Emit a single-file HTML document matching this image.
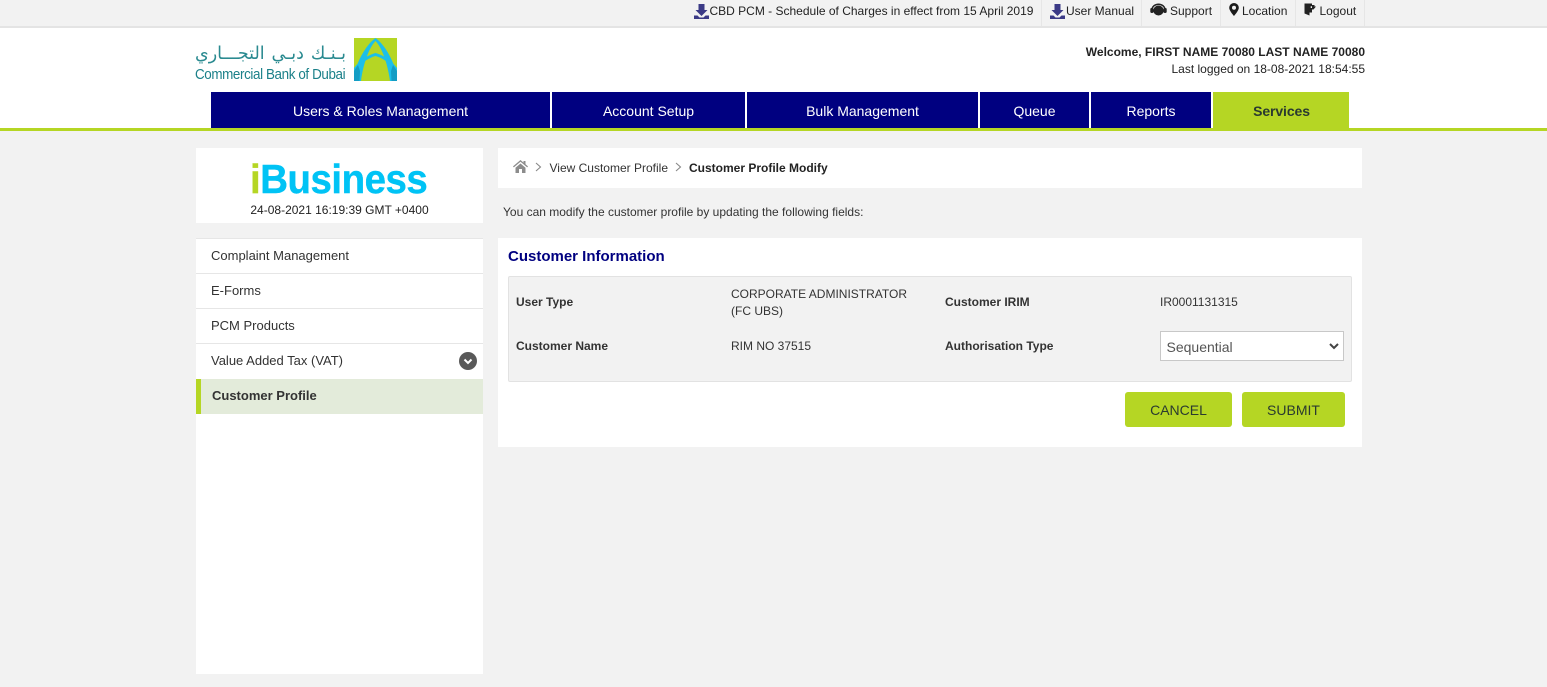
<!DOCTYPE html>
<html lang="en"><head><meta charset="utf-8"><title>Customer Profile Modify</title>
<style>
*{box-sizing:border-box}
html,body{margin:0;padding:0}
body{width:1547px;height:687px;position:relative;overflow:hidden;background:#f2f2f2;font-family:"Liberation Sans",Arial,sans-serif;font-size:12px;color:#222}
.a{position:absolute;white-space:nowrap}
.box{position:absolute;background:#fff}
.nav{position:absolute;top:92px;height:36px;background:#000080;color:#fff;font-size:14px;line-height:38px;text-align:center}
.sep{position:absolute;top:0;width:1px;height:26px;background:#e6e6e6}
.t{position:absolute;white-space:nowrap;line-height:14px;top:4px}
.mi{position:absolute;left:196px;width:287px;height:35px;border-top:1px solid #e6e6e6;padding-left:15px;font-size:13px;line-height:34px;background:#fff;color:#333}
.lab{font-weight:bold;color:#333}
.btn{position:absolute;top:392px;height:35px;background:#b5d624;border-radius:3px;color:#2a3a30;font-size:14px;line-height:36px;text-align:center}
svg{position:absolute;display:block}
</style></head>
<body>
<div class="a" style="left:0;top:0;width:1547px;height:28px;background:#f2f2f2;border-bottom:2px solid #e4e4e4"></div>
<div class="sep" style="left:1041px"></div><div class="sep" style="left:1141px"></div><div class="sep" style="left:1220px"></div><div class="sep" style="left:1295px"></div><div class="sep" style="left:1364px"></div>

<svg style="left:694px;top:4px" width="15" height="15" viewBox="0 0 15 15"><path d="M4.500 0h6v6h3L7.500 12 1.500 6h3z M0 11.500h3.500l2 2h4l2-2H15V15H0z" fill="#3b3a86"/></svg>
<div class="t" style="left:709.500px">CBD PCM - Schedule of Charges in effect from 15 April 2019</div>
<svg style="left:1050px;top:4px" width="15" height="15" viewBox="0 0 15 15"><path d="M4.500 0h6v6h3L7.500 12 1.500 6h3z M0 11.500h3.500l2 2h4l2-2H15V15H0z" fill="#3b3a86"/></svg>
<div class="t" style="left:1066px">User Manual</div>
<svg style="left:1150px;top:3px" width="17" height="14" viewBox="0 0 17 14"><path d="M1.800 7.500C2 3.500 5 1.200 8.500 1.200s6.500 2.300 6.700 6.300" fill="none" stroke="#222" stroke-width="1.500"/><ellipse cx="8.500" cy="7.500" rx="5.200" ry="5" fill="#222"/><rect x="0.300" y="5" width="3.200" height="5" rx="1.200" fill="#222"/><rect x="13.500" y="5" width="3.200" height="5" rx="1.200" fill="#222"/></svg>
<div class="t" style="left:1170px">Support</div>
<svg style="left:1229px;top:3px" width="10" height="13" viewBox="0 0 10 13"><path fill-rule="evenodd" d="M5 0a4.800 4.800 0 0 1 4.800 4.800C9.800 7.800 5 13 5 13S.2 7.800.2 4.800A4.800 4.800 0 0 1 5 0zM5 2.800a2 2 0 1 0 0 4 2 2 0 0 0 0-4z" fill="#1c1c1c"/></svg>
<div class="t" style="left:1242px">Location</div>
<svg style="left:1304px;top:3px" width="13" height="13" viewBox="0 0 13 13"><path d="M.5.500H8v2.800H6.700V5H8V9.500H5.500V12.500L.5 10.500z" fill="#222"/><path d="M8 2h2.500v1.500H12L9.500 6.500H8z" fill="#222"/></svg>
<div class="t" style="left:1319.500px">Logout</div>

<div class="box" style="left:0;top:28px;width:1547px;height:103px;border-bottom:3px solid #b5d624"></div>

<div class="a" dir="rtl" style="left:195px;top:41px;width:151px;height:26px;font-family:'DejaVu Sans',sans-serif;font-size:17.500px;line-height:26px;color:#2a8a90;text-align:justify;text-align-last:justify;white-space:normal">بـنـك دبـي التجـــاري</div>
<div class="a" style="left:195px;top:67px;font-size:14.500px;line-height:16px;color:#1b8089;letter-spacing:-.42px;transform:scaleX(.925);transform-origin:left">Commercial Bank of Dubai</div>
<svg style="left:354px;top:38px" width="43" height="43" viewBox="0 0 43 43"><rect width="43" height="43" fill="#b5d624"/><path d="M21.500 0C13 6 5 20 1 33L0 43H7C9 28 14 11 21.500 3 29 11 34 28 36 43H43L42 33C38 20 30 6 21.500 0Z" fill="#1cbfe9"/><path d="M0 30C6 22 14 17 21.500 15 29 17 37 22 43 30V33C37 26 29 20 21.500 18 14 20 6 26 0 33Z" fill="#1cbfe9"/><path d="M0 33 4 27 6 33 5.500 43H0ZM43 33 39 27 37 33 37.500 43H43Z" fill="#149dc4"/></svg>

<div class="a" style="right:182px;top:45px;line-height:14px;font-weight:bold;color:#222">Welcome, FIRST NAME 70080 LAST NAME 70080</div>
<div class="a" style="right:182px;top:62px;line-height:14px;color:#222">Last logged on 18-08-2021 18:54:55</div>

<div class="nav" style="left:211px;width:339px">Users &amp; Roles Management</div>
<div class="nav" style="left:552px;width:193px">Account Setup</div>
<div class="nav" style="left:747px;width:231px">Bulk Management</div>
<div class="nav" style="left:980px;width:109px">Queue</div>
<div class="nav" style="left:1091px;width:120px">Reports</div>
<div class="nav" style="left:1213px;width:136px;background:#b5d624;color:#2a3a30;font-weight:bold;letter-spacing:-.1px;padding-left:1px">Services</div>

<div class="box" style="left:196px;top:148px;width:287px;height:75px"></div>
<div class="a" style="left:250px;top:154px;font-size:41px;line-height:50px;font-weight:bold;letter-spacing:-.5px;color:#00c3f5;-webkit-text-stroke:.4px #00c3f5;transform:scaleX(.937);transform-origin:left"><span style="color:#b5d624;-webkit-text-stroke:.4px #b5d624">i</span>Business</div>
<div class="a" style="left:196px;width:287px;top:203px;line-height:14px;text-align:center;color:#222">24-08-2021 16:19:39 GMT +0400</div>

<div class="box" style="left:196px;top:238px;width:287px;height:436px"></div>
<div class="mi" style="top:238px">Complaint Management</div>
<div class="mi" style="top:273px">E-Forms</div>
<div class="mi" style="top:308px">PCM Products</div>
<div class="mi" style="top:343px">Value Added Tax (VAT)</div>
<svg style="left:459px;top:352px" width="18" height="18" viewBox="0 0 18 18"><circle cx="9" cy="9" r="9" fill="#595959"/><path d="M5.500 7.500 9 11l3.500-3.500" fill="none" stroke="#fff" stroke-width="2"/></svg>
<div class="a" style="left:196px;top:379px;width:287px;height:35px;background:#e3ebda;border-left:5px solid #b5d624;padding-left:11px;font-size:13px;line-height:33px;font-weight:bold;color:#333">Customer Profile</div>

<div class="box" style="left:498px;top:148px;width:864px;height:40px"></div>
<svg style="left:513px;top:160px" width="15" height="13" viewBox="0 0 15 13"><path d="M7.500 0 0 6.400l.8 1L7.500 1.800l6.700 5.600.8-1L12.500 4.300V1h-2v1.600zM2.500 7.800V13h3.500V9h3v4h3.500V7.800L7.500 3.500z" fill="#8c8c8c"/></svg>
<svg style="left:535px;top:162px" width="7" height="10" viewBox="0 0 7 10"><path d="M1 1l4.500 4L1 9" fill="none" stroke="#888" stroke-width="1.100"/></svg>
<div class="a" style="left:549.500px;top:161px;line-height:14px;color:#333">View Customer Profile</div>
<svg style="left:675px;top:162px" width="7" height="10" viewBox="0 0 7 10"><path d="M1 1l4.500 4L1 9" fill="none" stroke="#888" stroke-width="1.100"/></svg>
<div class="a" style="left:689px;top:161px;line-height:14px;font-weight:bold;color:#222">Customer Profile Modify</div>

<div class="a" style="left:503px;top:205px;line-height:14px;color:#333">You can modify the customer profile by updating the following fields:</div>

<div class="box" style="left:498px;top:238px;width:864px;height:209px"></div>
<div class="a" style="left:508px;top:248px;font-size:15px;line-height:18px;font-weight:bold;color:#000080">Customer Information</div>
<div class="a" style="left:508px;top:276px;width:844px;height:106px;background:#f2f2f2;border:1px solid #e2e2e2;border-radius:2px"></div>

<div class="a lab" style="left:516px;top:295px;line-height:14px">User Type</div>
<div class="a" style="left:731px;top:286px;line-height:17px;color:#333">CORPORATE ADMINISTRATOR<br>(FC UBS)</div>
<div class="a lab" style="left:945px;top:295px;line-height:14px">Customer IRIM</div>
<div class="a" style="left:1160px;top:295px;line-height:14px;color:#333">IR0001131315</div>
<div class="a lab" style="left:516px;top:339px;line-height:14px">Customer Name</div>
<div class="a" style="left:731px;top:339px;line-height:14px;color:#333">RIM NO 37515</div>
<div class="a lab" style="left:945px;top:339px;line-height:14px">Authorisation Type</div>

<div class="a" style="left:1160px;top:331px;width:184px;height:30px;background:#fff;border:1px solid #c8c8c8;font-size:14px;line-height:30px;padding-left:5.500px;color:#555">Sequential</div>
<svg style="left:1329px;top:342px" width="10" height="8" viewBox="0 0 10 8"><path d="M1 2l4 4 4-4" fill="none" stroke="#444" stroke-width="2"/></svg>

<div class="btn" style="left:1125px;width:107px">CANCEL</div>
<div class="btn" style="left:1242px;width:103px">SUBMIT</div>
</body></html>
